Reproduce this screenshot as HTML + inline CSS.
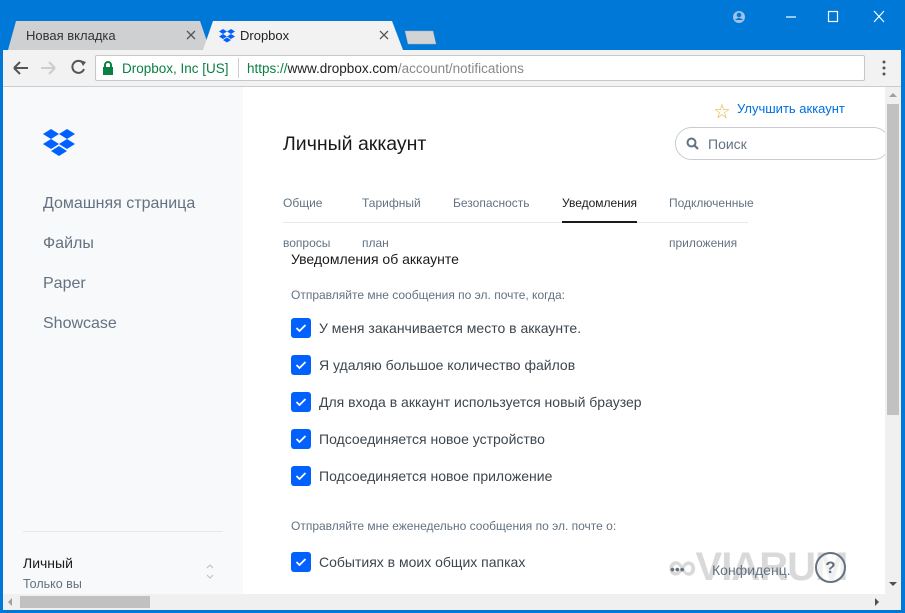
<!DOCTYPE html>
<html><head><meta charset="utf-8"><style>
*{margin:0;padding:0;box-sizing:border-box}
body{width:905px;height:613px;overflow:hidden;background:#0078d7;font-family:"Liberation Sans","Noto Sans CJK SC",sans-serif;position:relative}
.a{position:absolute}
.tab{position:absolute;height:29px;top:21px;font-size:13px;line-height:29px;padding-left:12px}
.cb{position:absolute;left:291px;width:20px;height:20px;background:#0061fe;border-radius:3px}
.cb svg{position:absolute;left:4px;top:5px}
.lbl{position:absolute;left:319px;font-size:14px;color:#3d464d}
.nav{position:absolute;left:43px;font-size:16px;color:#637282}
.tb{position:absolute;top:196px;font-size:12px;color:#637282}
</style></head><body>
<svg class="a" style="left:0;top:0" width="905" height="52">
<path d="M8 50 L16 21 L200 21 L210 50 Z" fill="#cfd0d2"/>
<path d="M203 50 L213 21 L392 21 L403 50 Z" fill="#f2f2f2"/>
<path d="M405 31 L408 44 L436 44 L433 31 Z" fill="#d2d3d5" stroke="#aab" stroke-width=".5"/>
<circle cx="739" cy="17" r="6" fill="#9fc2e6"/><circle cx="739" cy="15" r="2.3" fill="#0078d7"/><path d="M735 20 Q739 16 743 20" fill="#0078d7"/>
<path d="M786 17 H796" stroke="#fff" stroke-width="1.2"/>
<rect x="828.5" y="11.5" width="9" height="10" fill="none" stroke="#fff" stroke-width="1.2"/>
<path d="M874 11 L884 22 M884 11 L874 22" stroke="#fff" stroke-width="1.2"/>
<path d="M187 31 L195 39 M195 31 L187 39" stroke="#555" stroke-width="1.3"/>
<path d="M380 31 L388 39 M388 31 L380 39" stroke="#555" stroke-width="1.3"/>
<g fill="#0061fe" transform="translate(219,29) scale(.5)"><path d="M8 0 L16 5 L8 10 L0 5Z M24 0 L32 5 L24 10 L16 5Z M8 10 L16 15 L8 20 L0 15Z M24 10 L32 15 L24 20 L16 15Z M16 17 L24 22 L16 27 L8 22Z"/></g>
</svg>
<div class="tab" style="left:14px;color:#333">Новая вкладка</div>
<div class="tab" style="left:228px;color:#222">Dropbox</div>
<div class="a" style="left:3px;top:50px;width:898px;height:37px;background:#f2f2f2;border-bottom:1px solid #ccc"></div>
<svg class="a" style="left:3px;top:50px" width="898" height="36">
<path d="M11 18 H25 M11 18 L17 12 M11 18 L17 24" stroke="#555" stroke-width="2" fill="none"/>
<path d="M52 18 H38 M52 18 L46 12 M52 18 L46 24" stroke="#ccc" stroke-width="2" fill="none"/>
<path d="M80 13 A6 6 0 1 0 81 19" stroke="#555" stroke-width="2" fill="none"/><path d="M77 10 L83 12 L80 16Z" fill="#555"/>
<path d="M849 10 L851 16 L857 16 L852 20 L854 26 L849 22 L844 26 L846 20 L841 16 L847 16Z" fill="none" stroke="#444" stroke-width="1.4"/>
<circle cx="881" cy="12" r="1.5" fill="#555"/><circle cx="881" cy="18" r="1.5" fill="#555"/><circle cx="881" cy="24" r="1.5" fill="#555"/>
</svg>
<div class="a" style="left:95px;top:55px;width:770px;height:26px;background:#fff;border:1px solid #c8c8c8;border-radius:2px"></div>
<svg class="a" style="left:102px;top:61px" width="12" height="14"><rect x="1" y="6" width="10" height="8" fill="#0b8043"/><path d="M3 6 V4 A3 3 0 0 1 9 4 V6" stroke="#0b8043" stroke-width="2" fill="none"/></svg>
<div class="a" style="left:122px;top:61px;font-size:13.5px;color:#0b8043">Dropbox, Inc [US]</div>
<div class="a" style="left:238px;top:58px;width:1px;height:20px;background:#ccc"></div>
<div class="a" style="left:247px;top:61px;font-size:13.5px;color:#888"><span style="color:#0b8043">https://</span><span style="color:#222">www.dropbox.com</span>/account/notifications</div>
<div class="a" style="left:3px;top:87px;width:882px;height:507px;background:#fff"></div>
<div class="a" style="left:3px;top:87px;width:240px;height:507px;background:#f7f9fa"></div>
<svg class="a" style="left:43px;top:129px" width="32" height="27" fill="#0061fe"><path d="M8 0 L16 5 L8 10 L0 5Z M24 0 L32 5 L24 10 L16 5Z M8 10 L16 15 L8 20 L0 15Z M24 10 L32 15 L24 20 L16 15Z M16 17 L24 22 L16 27 L8 22Z"/></svg>
<div class="nav" style="top:195px">Домашняя страница</div>
<div class="nav" style="top:235px">Файлы</div>
<div class="nav" style="top:275px">Paper</div>
<div class="nav" style="top:315px">Showcase</div>
<div class="a" style="left:23px;top:531px;width:200px;height:1px;background:#e6e8eb"></div>
<div class="a" style="left:23px;top:555px;font-size:14px;color:#1e1919">Личный</div>
<div class="a" style="left:23px;top:577px;font-size:12.5px;color:#637282">Только вы</div>
<svg class="a" style="left:205px;top:563px" width="10" height="18"><path d="M2 5 L5 2 L8 5 M2 12 L5 15 L8 12" stroke="#c0c4c8" stroke-width="1.2" fill="none"/></svg>

<div class="a" style="left:714px;top:98px;font-size:16px;color:#e8b84a">☆</div>
<div class="a" style="left:737px;top:101px;font-size:13px;color:#0070e0">Улучшить аккаунт</div>
<div class="a" style="left:675px;top:127px;width:215px;height:33px;border:1px solid #c8ccd0;border-radius:17px;background:#fff"></div>
<svg class="a" style="left:686px;top:137px" width="14" height="14"><circle cx="5.5" cy="5.5" r="4" stroke="#637282" stroke-width="2" fill="none"/><path d="M8.5 8.5 L12 12" stroke="#637282" stroke-width="2.2"/></svg>
<div class="a" style="left:708px;top:136px;font-size:14px;color:#637282">Поиск</div>

<div class="a" style="left:283px;top:133px;font-size:19.5px;color:#1e1919">Личный аккаунт</div>
<div class="tb" style="left:283px">Общие</div>
<div class="tb" style="left:362px">Тарифный</div>
<div class="tb" style="left:453px">Безопасность</div>
<div class="tb" style="left:562px;color:#1e1919">Уведомления</div>
<div class="tb" style="left:669px">Подключенные</div>
<div class="a" style="left:283px;top:222px;width:465px;height:1px;background:#e6e8eb"></div>
<div class="a" style="left:562px;top:221px;width:75px;height:2px;background:#1e1919"></div>
<div class="tb" style="left:283px;top:236px">вопросы</div>
<div class="tb" style="left:362px;top:236px">план</div>
<div class="tb" style="left:669px;top:236px">приложения</div>
<div class="a" style="left:291px;top:251px;font-size:14px;color:#1e1919">Уведомления об аккаунте</div>
<div class="a" style="left:291px;top:288px;font-size:12px;color:#637282">Отправляйте мне сообщения по эл. почте, когда:</div>
<div class="a" style="left:291px;top:519px;font-size:12px;color:#637282">Отправляйте мне еженедельно сообщения по эл. почте о:</div>

<div class="cb" style="top:318px"><svg width="12" height="10"><path d="M1.5 5 L4.5 8 L10.5 2" stroke="#fff" stroke-width="1.8" fill="none"/></svg></div><div class="lbl" style="top:320px">У меня заканчивается место в аккаунте.</div>
<div class="cb" style="top:355px"><svg width="12" height="10"><path d="M1.5 5 L4.5 8 L10.5 2" stroke="#fff" stroke-width="1.8" fill="none"/></svg></div><div class="lbl" style="top:357px">Я удаляю большое количество файлов</div>
<div class="cb" style="top:392px"><svg width="12" height="10"><path d="M1.5 5 L4.5 8 L10.5 2" stroke="#fff" stroke-width="1.8" fill="none"/></svg></div><div class="lbl" style="top:394px">Для входа в аккаунт используется новый браузер</div>
<div class="cb" style="top:429px"><svg width="12" height="10"><path d="M1.5 5 L4.5 8 L10.5 2" stroke="#fff" stroke-width="1.8" fill="none"/></svg></div><div class="lbl" style="top:431px">Подсоединяется новое устройство</div>
<div class="cb" style="top:466px"><svg width="12" height="10"><path d="M1.5 5 L4.5 8 L10.5 2" stroke="#fff" stroke-width="1.8" fill="none"/></svg></div><div class="lbl" style="top:468px">Подсоединяется новое приложение</div>
<div class="cb" style="top:552px"><svg width="12" height="10"><path d="M1.5 5 L4.5 8 L10.5 2" stroke="#fff" stroke-width="1.8" fill="none"/></svg></div><div class="lbl" style="top:554px">Событиях в моих общих папках</div>

<div class="a" style="left:668px;top:545px;font-size:40px;font-weight:bold;color:rgba(160,160,160,.4);letter-spacing:-1px">∞VIARUM</div>
<div class="a" style="left:670px;top:561px;font-size:14px;color:#637282">•••</div>
<div class="a" style="left:712px;top:562px;font-size:14px;color:#637282">Конфиденц.</div>
<div class="a" style="left:815px;top:552px;width:31px;height:31px;border:2px solid #637282;border-radius:50%;background:rgba(255,255,255,.6);text-align:center;font-size:17px;line-height:27px;color:#637282;font-weight:bold">?</div>

<div class="a" style="left:885px;top:87px;width:16px;height:507px;background:#f0f0f0"></div>
<div class="a" style="left:887px;top:104px;width:12px;height:311px;background:#c1c1c1"></div>
<div class="a" style="left:889px;top:93px;width:0;height:0;border-left:4px solid transparent;border-right:4px solid transparent;border-bottom:4px solid #a0a0a0"></div>
<div class="a" style="left:889px;top:582px;width:0;height:0;border-left:4px solid transparent;border-right:4px solid transparent;border-top:4px solid #505050"></div>
<div class="a" style="left:3px;top:594px;width:898px;height:16px;background:#f0f0f0"></div>
<div class="a" style="left:20px;top:596px;width:130px;height:12px;background:#c1c1c1"></div>
<div class="a" style="left:8px;top:598px;width:0;height:0;border-top:4px solid transparent;border-bottom:4px solid transparent;border-right:4px solid #a0a0a0"></div>
<div class="a" style="left:875px;top:598px;width:0;height:0;border-top:4px solid transparent;border-bottom:4px solid transparent;border-left:4px solid #505050"></div>
</body></html>
